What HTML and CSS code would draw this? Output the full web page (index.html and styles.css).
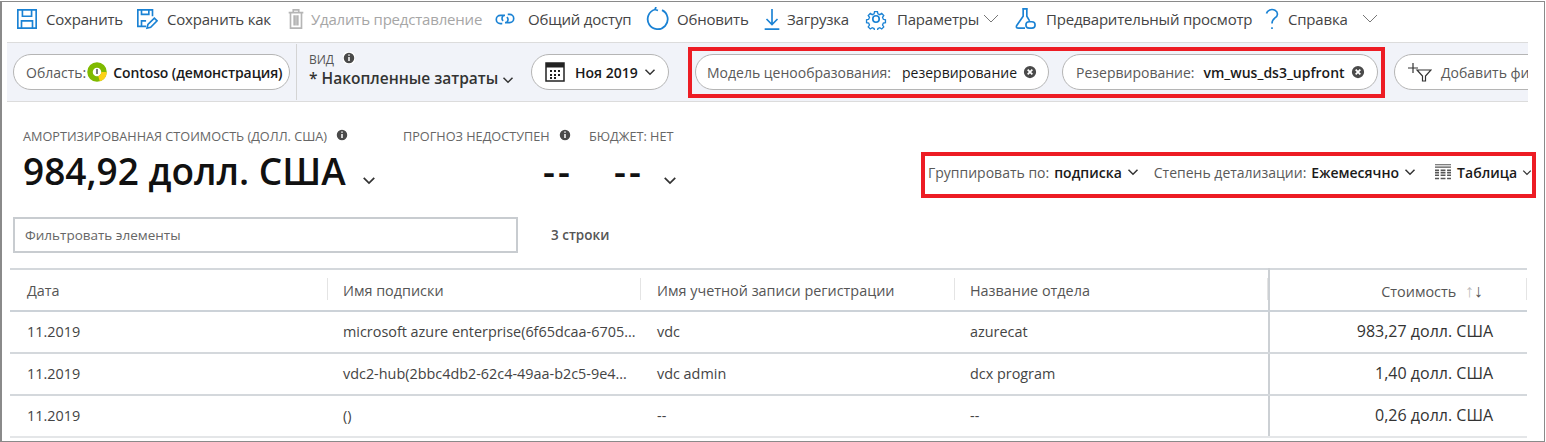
FILE: index.html
```html
<!DOCTYPE html>
<html lang="en">
<head>
  <meta charset="UTF-8">
  <title>Анализ затрат</title>
  <link rel="stylesheet" href="styles.css">
</head>
<body>
  <div class="frame">
    <div class="toolbar">
      <div class="tool tool-save">
        <svg class="tool-icon" viewBox="0 0 24 24"><path d="M2 2h20v20H2z M7 2v7h10V2 M6 22v-8h12v8"/></svg>
        <span>Сохранить</span>
      </div>
      <div class="tool tool-saveas">
        <svg class="tool-icon" viewBox="0 0 24 24"><path d="M11 20H2V2h16v7 M6 2v5h8V2 M6 20v-6h5"/><path d="M12 22l1-4 7-7 3 3-7 7z"/></svg>
        <span>Сохранить как</span>
      </div>
      <div class="tool tool-delete is-disabled">
        <svg class="tool-icon" viewBox="0 0 24 24"><path d="M4 5h16 M9 5V2h6v3 M6 5v17h12V5 M10 8v11 M12 8v11 M14 8v11"/></svg>
        <span>Удалить представление</span>
      </div>
      <div class="tool tool-share">
        <svg class="tool-icon" viewBox="0 0 24 24"><path d="M12 8H7a4.500 4.500 0 0 0 0 9h2 M10 14a3.500 3.500 0 0 1 1-6"/><path d="M12 16h5a4.500 4.500 0 0 0 0-9h-2 M14 10a3.500 3.500 0 0 1-1 6"/></svg>
        <span>Общий доступ</span>
      </div>
      <div class="tool tool-refresh">
        <svg class="tool-icon tool-icon-big" viewBox="0 0 24 24"><path d="M9 2.500a10 10 0 1 0 7 .6 M9 2.500l1-2.500 M9 2.500l3 1"/></svg>
        <span>Обновить</span>
      </div>
      <div class="tool tool-download">
        <svg class="tool-icon" viewBox="0 0 24 24"><path d="M12 1v17 M6 12l6 6 6-6 M4 23h16"/></svg>
        <span>Загрузка</span>
      </div>
      <div class="tool tool-settings">
        <svg class="tool-icon" viewBox="0 0 24 24"><circle cx="12" cy="12" r="3.500"/><path d="M10 2h4l.6 3 2.600 1.100 2.600-1.700 2.800 2.800-1.700 2.600 1.100 2.600 2.900.6v4l-2.900.6-1.100 2.600 1.700 2.600-2.800 2.800-2.600-1.700-2.600 1.100-.6 2.900h-4l-.6-2.900-2.600-1.100-2.600 1.700-2.800-2.800 1.700-2.600-1.100-2.600-2.900-.6v-4l2.900-.6 1.100-2.600-1.700-2.600 2.800-2.800 2.600 1.700 2.600-1.100z" transform="translate(2.400 2.400) scale(.8)"/></svg>
        <span>Параметры</span>
        <svg class="chev chev-thin" viewBox="0 0 16 10"><path d="M1 1l7 7 7-7"/></svg>
      </div>
      <div class="tool tool-preview">
        <svg class="tool-icon" viewBox="0 0 24 24"><path d="M9 1h6 M10 1v8L3 19c-1 2 0 3 2 3h7 M14 1v8l3 5"/><rect class="flask-fill" x="13" y="15" width="10" height="7" rx="3.500"/></svg>
        <span>Предварительный просмотр</span>
      </div>
      <div class="tool tool-help">
        <svg class="tool-icon" viewBox="0 0 24 24"><path d="M6 6a6 5 0 1 1 9 5c-2 1.500-3 3-3 6 M12 21v2"/></svg>
        <span>Справка</span>
        <svg class="chev chev-thin" viewBox="0 0 16 10"><path d="M1 1l7 7 7-7"/></svg>
      </div>
    </div>

    <div class="filterbar">
      <div class="pill pill-scope">
        <span class="muted">Область:</span>
        <svg class="scope-logo" viewBox="0 0 20 20"><circle cx="10" cy="10" r="7" fill="none" stroke="#7fba00" stroke-width="5.500"/><path d="M17 10a7 7 0 0 1-5 6.700" fill="none" stroke="#fcd116" stroke-width="5.500"/><path d="M10 7v5" stroke="#555" stroke-width="1.500"/></svg>
        <strong>Contoso (демонстрация)</strong>
      </div>
      <div class="view">
        <div class="view-label">ВИД <svg class="info" viewBox="0 0 12 12"><circle cx="6" cy="6" r="6"/><path d="M6 5v4 M6 2.500v1.200"/></svg></div>
        <div class="view-name">* Накопленные затраты <svg class="chev" viewBox="0 0 16 10"><path d="M2 2l6 6 6-6"/></svg></div>
      </div>
      <div class="pill pill-date">
        <svg class="cal" viewBox="0 0 20 20"><rect x="1" y="1" width="18" height="18" fill="#fff" stroke="#222" stroke-width="1.500"/><rect x="1" y="1" width="18" height="4.500" fill="#222"/><path d="M5 8h2v2H5z M9 8h2v2H9z M13 8h2v2h-2z M5 12h2v2H5z M9 12h2v2H9z M13 12h2v2h-2z M5 15h2v2H5z M9 15h2v2H9z" fill="#222"/></svg>
        <strong>Ноя 2019</strong>
        <svg class="chev" viewBox="0 0 16 10"><path d="M2 2l6 6 6-6"/></svg>
      </div>
      <div class="redbox redbox-filters">
        <div class="pill pill-model">
          <span class="muted">Модель ценообразования:</span>
          <span class="value">резервирование</span>
          <svg class="close" viewBox="0 0 12 12"><circle cx="6" cy="6" r="6"/><path d="M4 4l4 4 M8 4l-4 4"/></svg>
        </div>
        <div class="pill pill-reserve">
          <span class="muted">Резервирование:</span>
          <strong>vm_wus_ds3_upfront</strong>
          <svg class="close" viewBox="0 0 12 12"><circle cx="6" cy="6" r="6"/><path d="M4 4l4 4 M8 4l-4 4"/></svg>
        </div>
      </div>
      <div class="pill pill-add">
        <svg class="addfilter" viewBox="0 0 24 20"><path d="M5 1v10 M0 6h10 M9 8h14l-5.500 6v5h-3v-5z"/></svg>
        <span class="muted">Добавить фильтр</span>
      </div>
    </div>

    <div class="summary">
      <div class="stat stat-cost">
        <div class="stat-label">АМОРТИЗИРОВАННАЯ СТОИМОСТЬ (ДОЛЛ. США) <svg class="info" viewBox="0 0 12 12"><circle cx="6" cy="6" r="6"/><path d="M6 5v4 M6 2.500v1.200"/></svg></div>
        <div class="stat-value">984,92 долл. США <svg class="chev" viewBox="0 0 16 10"><path d="M2 2l6 6 6-6"/></svg></div>
      </div>
      <div class="stat stat-forecast">
        <div class="stat-label">ПРОГНОЗ НЕДОСТУПЕН <svg class="info" viewBox="0 0 12 12"><circle cx="6" cy="6" r="6"/><path d="M6 5v4 M6 2.500v1.200"/></svg></div>
        <div class="stat-value stat-dash">--</div>
      </div>
      <div class="stat stat-budget">
        <div class="stat-label">БЮДЖЕТ: НЕТ</div>
        <div class="stat-value stat-dash">-- <svg class="chev" viewBox="0 0 16 10"><path d="M2 2l6 6 6-6"/></svg></div>
      </div>
      <div class="redbox redbox-group">
        <span class="muted">Группировать по:</span>
        <strong class="group-value">подписка</strong>
        <svg class="chev" viewBox="0 0 16 10"><path d="M2 2l6 6 6-6"/></svg>
        <span class="muted group-gap">Степень детализации:</span>
        <strong class="group-value">Ежемесячно</strong>
        <svg class="chev" viewBox="0 0 16 10"><path d="M2 2l6 6 6-6"/></svg>
        <svg class="grid-icon" viewBox="0 0 20 20"><path d="M0 1h20 M0 4h20" stroke-width="1.500"/><path d="M0 8h5 M7 8h6 M15 8h5 M0 11h5 M7 11h6 M15 11h5 M0 14h5 M7 14h6 M15 14h5 M0 18h5 M7 18h6 M15 18h5" stroke-width="2"/></svg>
        <strong class="group-value">Таблица</strong>
        <svg class="chev chev-small" viewBox="0 0 16 10"><path d="M2 2l6 6 6-6"/></svg>
      </div>
    </div>

    <div class="filter-row">
      <div class="filter-input">Фильтровать элементы</div>
      <div class="row-count">3 строки</div>
    </div>

    <table class="grid">
      <thead>
        <tr>
          <th class="col-date">Дата</th>
          <th class="col-sub">Имя подписки</th>
          <th class="col-acc">Имя учетной записи регистрации</th>
          <th class="col-dep">Название отдела</th>
          <th class="col-cost">Стоимость <span class="sort"><span class="sort-up">↑</span>↓</span></th>
        </tr>
      </thead>
      <tbody>
        <tr>
          <td>11.2019</td>
          <td>microsoft azure enterprise(6f65dcaa-6705...</td>
          <td>vdc</td>
          <td>azurecat</td>
          <td class="cost">983,27 долл. США</td>
        </tr>
        <tr>
          <td>11.2019</td>
          <td>vdc2-hub(2bbc4db2-62c4-49aa-b2c5-9e4...</td>
          <td>vdc admin</td>
          <td>dcx program</td>
          <td class="cost">1,40 долл. США</td>
        </tr>
        <tr>
          <td>11.2019</td>
          <td>()</td>
          <td>--</td>
          <td>--</td>
          <td class="cost">0,26 долл. США</td>
        </tr>
      </tbody>
    </table>
  </div>
</body>
</html>
```

FILE: styles.css
```css
html, body {
  margin: 0;
  padding: 0;
  background: #fff;
}

body {
  font-family: 'Open Sans', 'Noto Sans', sans-serif;
  font-size: 14px;
  color: #333;
  overflow: hidden;
}

.frame {
  box-sizing: border-box;
  width: 1545px;
  height: 441px;
  margin-top: 1px;
  border: 1px solid #8a8a8a;
  border-left-width: 2px;
  overflow: hidden;
}

/* top command bar */
.toolbar {
  display: flex;
  align-items: center;
  box-sizing: border-box;
  height: 40px;
  padding: 0 0 7px 14px;
}

.tool {
  display: flex;
  align-items: center;
  flex: none;
  gap: 8px;
  font-size: 15px;
  color: #444;
  white-space: nowrap;
}

.tool span {
  letter-spacing: -0.2px;
}

.tool-icon {
  width: 22px;
  height: 22px;
  fill: none;
  stroke: #1a82d4;
  stroke-width: 1.800;
}

.tool-icon-big {
  width: 24px;
  height: 24px;
}

.is-disabled {
  color: #a6a6a6;
}

.is-disabled .tool-icon {
  stroke: #b5b5b5;
}

.tool-save { width: 120px; }
.tool-saveas { width: 149px; gap: 9px; }
.tool-delete { width: 209px; gap: 4px; }
.tool-share { width: 152px; gap: 12px; }
.tool-refresh { width: 115px; gap: 7px; }
.tool-download { width: 104px; gap: 4px; }
.tool-settings { width: 149px; gap: 10px; }
.tool-preview { width: 247px; gap: 10px; }
.tool-help { gap: 5px; }

.tool-settings .chev {
  margin-left: -6px;
}

.tool-help .chev {
  margin-left: 9px;
}

.flask-fill {
  fill: #fff;
}

.chev {
  flex: none;
  width: 12px;
  height: 8px;
  fill: none;
  stroke: #333;
  stroke-width: 2;
}

.chev-thin {
  width: 16px;
  height: 10px;
  stroke: #777;
  stroke-width: 1;
}

.chev-small {
  width: 10px;
  height: 7px;
}

/* filter strip */
.filterbar {
  display: flex;
  align-items: center;
  height: 58px;
  width: 1521px;
  margin-left: 5px;
  background: #f1f3f9;
  border-top: 1px solid #dcdcdc;
  border-bottom: 1px solid #dcdcdc;
  overflow: hidden;
}

.pill {
  display: flex;
  align-items: center;
  flex: none;
  box-sizing: border-box;
  height: 36px;
  background: #fff;
  border: 1.500px solid #b5b5b5;
  border-radius: 18px;
  white-space: nowrap;
}

.muted {
  color: #595959;
}

strong {
  font-weight: 600;
  color: #1a1a1a;
}

.pill-scope {
  width: 277px;
  margin-left: 6px;
  padding-left: 12px;
}

.pill-scope strong {
  letter-spacing: -0.1px;
}

.scope-logo {
  width: 20px;
  height: 20px;
  margin: 0 6px 0 1px;
}

.view {
  flex: none;
  box-sizing: border-box;
  width: 235px;
  height: 56px;
  margin-left: 6px;
  padding: 8px 0 0 12px;
  border-left: 1px solid #d4d4d4;
  white-space: nowrap;
}

.view-label {
  font-size: 12px;
  line-height: 15px;
  color: #555;
}

.view-name {
  font-size: 15.500px;
  line-height: 22px;
  font-weight: 600;
  color: #333;
}

.info {
  width: 12px;
  height: 12px;
  margin-left: 6px;
  fill: #4a4a4a;
  stroke: #fff;
  stroke-width: 1.500;
}

.pill-date {
  width: 138px;
  padding-left: 13px;
}

.cal {
  width: 20px;
  height: 20px;
  margin-right: 10px;
}

.pill-date .chev {
  margin-left: 6px;
}

.redbox {
  flex: none;
  box-sizing: border-box;
  border: 4px solid #ed1c24;
}

.redbox-filters {
  display: flex;
  align-items: center;
  gap: 13px;
  width: 697px;
  height: 51px;
  margin-left: 19px;
  padding-left: 3px;
}

.pill-model {
  width: 354px;
  padding-left: 11px;
}

.pill-reserve {
  width: 316px;
  padding-left: 13px;
}

.value {
  margin-left: 11px;
  color: #1a1a1a;
}

.pill-reserve strong {
  margin-left: 9px;
}

.close {
  width: 14px;
  height: 14px;
  margin-left: 6px;
  fill: #4a4a4a;
  stroke: #fff;
  stroke-width: 1.500;
}

.pill-add {
  width: 200px;
  margin-left: 9px;
  padding-left: 13px;
}

.addfilter {
  width: 24px;
  height: 20px;
  margin: 0 9px 0 0;
  fill: none;
  stroke: #333;
  stroke-width: 1.200;
}

/* totals */
.summary {
  display: flex;
  height: 98px;
  padding-left: 21px;
}

.stat {
  flex: none;
}

.stat-label {
  margin-top: 26px;
  font-size: 12.700px;
  line-height: 16px;
  color: #666;
  white-space: nowrap;
}

.stat-value {
  font-size: 37px;
  line-height: 44px;
  margin-top: 5px;
  font-weight: 600;
  color: #111;
  white-space: nowrap;
}

.stat-value .chev {
  width: 14px;
  height: 9px;
  margin-left: 7px;
}

.stat-cost { width: 380px; }
.stat-forecast { width: 186px; }
.stat-budget { width: 332px; }

.stat-dash {
  padding-left: 140px;
  letter-spacing: 3px;
}

.stat-budget .stat-dash {
  padding-left: 25px;
}

.redbox-group {
  display: flex;
  align-items: center;
  gap: 5px;
  width: 615px;
  height: 46px;
  margin-top: 50px;
  padding: 0 0 6px 3px;
  white-space: nowrap;
}

.group-gap {
  margin-left: 10px;
}

.grid-icon {
  width: 20px;
  height: 20px;
  margin: 0 1px 0 14px;
  fill: none;
  stroke: #555;
}

/* search */
.filter-row {
  display: flex;
  align-items: center;
  height: 36px;
  margin-top: 17px;
  padding-left: 11px;
}

.filter-input {
  box-sizing: border-box;
  width: 505px;
  height: 36px;
  padding-left: 10px;
  line-height: 33px;
  border: 2px solid #c8ccd0;
  color: #666;
  font-size: 13.500px;
}

.row-count {
  margin-left: 33px;
  font-size: 13.500px;
  font-weight: 600;
  color: #555;
}

/* data grid */
.grid {
  width: 1517px;
  margin: 15px 0 0 8px;
  border-collapse: collapse;
  table-layout: fixed;
  border-top: 2px solid #d4d8dc;
  font-size: 14.400px;
}

.grid th {
  height: 39px;
  padding: 1px 0 0 15px;
  font-weight: 400;
  text-align: left;
  color: #555;
  border-bottom: 2px solid #ccd2d8;
  background: linear-gradient(#e4e4e4, #e4e4e4) right 8px / 1px 22px no-repeat;
}

.grid td {
  height: 38px;
  padding: 0 0 2px 15px;
  color: #444;
  white-space: nowrap;
  overflow: hidden;
  border-bottom: 2px solid #d4d8dc;
}

.grid tr:last-child td {
  border-bottom-color: #e4e6e8;
}

.grid th:first-child,
.grid td:first-child {
  padding-left: 17px;
}

.grid th:nth-child(3),
.grid td:nth-child(3) {
  padding-left: 16px;
}

.col-date { width: 301px; }
.col-sub { width: 298px; }
.col-acc { width: 298px; }
.col-dep { width: 298px; }

.grid .col-cost {
  text-align: right;
  padding-right: 44px;
  border-left: 2px solid #ccd0d4;
}

.grid .cost {
  text-align: right;
  padding-right: 34px;
  border-left: 2px solid #ccd0d4;
  color: #333;
  font-size: 16px;
}

.sort {
  margin-left: 5px;
  font-size: 18px;
  line-height: 1;
}

.sort-up {
  color: #bbb;
}
```
